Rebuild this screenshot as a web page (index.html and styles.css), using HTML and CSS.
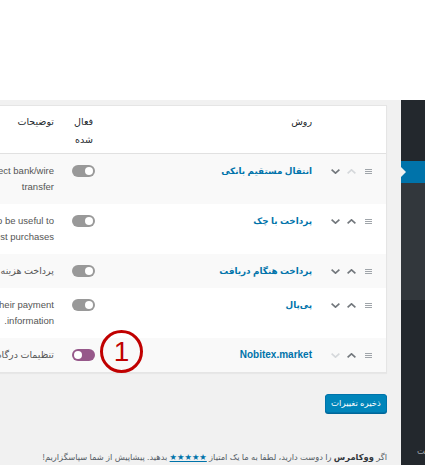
FILE: index.html
```html
<!DOCTYPE html>
<html lang="fa" dir="rtl">
<head>
<meta charset="utf-8">
<title>درگاه‌های پرداخت</title>
<link rel="stylesheet" href="styles.css">
</head>
<body>
<div class="topbar"></div>
<div class="layout">
  <aside class="adminmenu">
    <div class="menu-inner">
      <div class="menu-top"></div>
      <div class="menu-current"></div>
      <div class="submenu"></div>
      <div class="collapse"><span>جمع کردن فهرست</span></div>
    </div>
  </aside>
  <main class="content">
    <table class="gateways">
      <colgroup>
        <col class="c-sort"><col class="c-name"><col class="c-status"><col class="c-desc">
      </colgroup>
      <thead>
        <tr>
          <th class="sort"></th>
          <th class="name">روش</th>
          <th class="status">فعال شده</th>
          <th class="desc">توضیحات</th>
        </tr>
      </thead>
      <tbody>
        <tr class="alt">
          <td class="sort"><div class="sorter">
            <svg class="ico handle" width="7" height="5" viewBox="0 0 7 5"><path d="M0 0.5H7M0 2.5H7M0 4.5H7"/></svg>
            <svg class="ico off" width="9" height="5" viewBox="0 0 9 5"><path d="M0.6 4.4L4.5 0.8L8.4 4.4"/></svg>
            <svg class="ico" width="9" height="5" viewBox="0 0 9 5"><path d="M0.6 0.6L4.5 4.2L8.4 0.6"/></svg>
          </div></td>
          <td class="name"><a href="#">انتقال مستقیم بانکی</a></td>
          <td class="status"><span class="toggle on"></span></td>
          <td class="desc">Take payments in person via BACS. More commonly known as direct bank/wire<br>transfer</td>
        </tr>
        <tr>
          <td class="sort"><div class="sorter">
            <svg class="ico handle" width="7" height="5" viewBox="0 0 7 5"><path d="M0 0.5H7M0 2.5H7M0 4.5H7"/></svg>
            <svg class="ico" width="9" height="5" viewBox="0 0 9 5"><path d="M0.6 4.4L4.5 0.8L8.4 4.4"/></svg>
            <svg class="ico" width="9" height="5" viewBox="0 0 9 5"><path d="M0.6 0.6L4.5 4.2L8.4 0.6"/></svg>
          </div></td>
          <td class="name"><a href="#">پرداخت با چک</a></td>
          <td class="status"><span class="toggle on"></span></td>
          <td class="desc">Take payments in person via checks. This offline gateway can also be useful to<br>test purchases</td>
        </tr>
        <tr class="alt">
          <td class="sort"><div class="sorter">
            <svg class="ico handle" width="7" height="5" viewBox="0 0 7 5"><path d="M0 0.5H7M0 2.5H7M0 4.5H7"/></svg>
            <svg class="ico" width="9" height="5" viewBox="0 0 9 5"><path d="M0.6 4.4L4.5 0.8L8.4 4.4"/></svg>
            <svg class="ico" width="9" height="5" viewBox="0 0 9 5"><path d="M0.6 0.6L4.5 4.2L8.4 0.6"/></svg>
          </div></td>
          <td class="name"><a href="#">پرداخت هنگام دریافت</a></td>
          <td class="status"><span class="toggle on"></span></td>
          <td class="desc">پرداخت هزینه هنگام تحویل کالا.</td>
        </tr>
        <tr>
          <td class="sort"><div class="sorter">
            <svg class="ico handle" width="7" height="5" viewBox="0 0 7 5"><path d="M0 0.5H7M0 2.5H7M0 4.5H7"/></svg>
            <svg class="ico" width="9" height="5" viewBox="0 0 9 5"><path d="M0.6 4.4L4.5 0.8L8.4 4.4"/></svg>
            <svg class="ico" width="9" height="5" viewBox="0 0 9 5"><path d="M0.6 0.6L4.5 4.2L8.4 0.6"/></svg>
          </div></td>
          <td class="name"><a href="#">پی‌پال</a></td>
          <td class="status"><span class="toggle on"></span></td>
          <td class="desc">PayPal Standard redirects customers to PayPal to enter their payment<br>information.</td>
        </tr>
        <tr class="alt">
          <td class="sort"><div class="sorter">
            <svg class="ico handle" width="7" height="5" viewBox="0 0 7 5"><path d="M0 0.5H7M0 2.5H7M0 4.5H7"/></svg>
            <svg class="ico" width="9" height="5" viewBox="0 0 9 5"><path d="M0.6 4.4L4.5 0.8L8.4 4.4"/></svg>
            <svg class="ico off" width="9" height="5" viewBox="0 0 9 5"><path d="M0.6 0.6L4.5 4.2L8.4 0.6"/></svg>
          </div></td>
          <td class="name"><a href="#" class="latin">Nobitex.market</a></td>
          <td class="status"><span class="toggle purple"></span></td>
          <td class="desc">تنظیمات درگاه پرداخت نوبیتکس</td>
        </tr>
      </tbody>
    </table>
    <div class="annot">1</div>
    <p class="submit"><button type="button" class="btn-primary">ذخیره تغییرات</button></p>
    <p class="footer-note">اگر <strong>ووکامرس</strong> را دوست دارید، لطفا به ما یک امتیاز <a href="#" class="stars">★★★★★</a> بدهید. پیشاپیش از شما سپاسگزاریم!</p>
  </main>
</div>
</body>
</html>
```

FILE: styles.css
```css
* { box-sizing: border-box; }
html, body { margin: 0; padding: 0; }
body {
  direction: rtl;
  width: 425px;
  height: 465px;
  overflow: hidden;
  background: #f1f1f1;
  color: #444;
  font-family: "Liberation Sans", "DejaVu Sans", sans-serif;
  font-size: 9.5px;
}

.topbar { height: 100px; background: #fff; }

.layout { display: flex; min-height: 365px; }

/* admin menu (only its left edge is visible) */
.adminmenu {
  flex: 0 0 24px;
  width: 24px;
  background: #23282d;
  overflow: hidden;
  direction: ltr;
}
.menu-inner { width: 160px; direction: rtl; }
.menu-top { height: 61px; }
.menu-current { height: 22px; background: #0073aa; position: relative; }
.menu-current::after {
  content: "";
  position: absolute;
  left: 0;
  top: 6px;
  border: 5px solid transparent;
  border-left-color: #f1f1f1;
}
.submenu { height: 117px; background: #32373c; }
.collapse {
  display: flex;
  justify-content: flex-end;
  padding: 143px 0 0 16px;
  line-height: 16px;
  color: #a0a5aa;
  font-size: 8.5px;
  white-space: nowrap;
}

/* main content */
.content {
  flex: 1 1 auto;
  min-width: 0;
  overflow: hidden;
  position: relative;
  padding: 5px 14px 0 0;
}

.gateways {
  width: 600px;
  table-layout: fixed;
  border-collapse: separate;
  border-spacing: 0;
  background: #fff;
  border: 1px solid #e5e5e5;
  box-shadow: 0 1px 1px rgba(0,0,0,.04);
}
.c-sort { width: 64px; }
.c-name { width: 217px; }
.c-status { width: 41px; }
.c-desc { width: 276px; }

.gateways th {
  padding: 7px 10px 4px;
  text-align: right;
  font-weight: normal;
  line-height: 18px;
  color: #23282d;
  border-bottom: 1px solid #e1e1e1;
  vertical-align: top;
}
.gateways th.status { padding: 7px 12px 4px 8px; }

.gateways td {
  padding: 9px 10px;
  line-height: 16px;
  vertical-align: top;
}
.gateways tr.alt td { background: #f9f9f9; }

.gateways td.sort { padding: 9px 14px 9px 0; }
.sorter {
  display: flex;
  align-items: center;
  height: 16px;
  gap: 7px;
}
.sorter .handle { margin-left: 2px; }
.ico { display: block; fill: none; stroke: #72777c; stroke-width: 1.6; }
.ico.off { stroke: #d5d8db; }
.ico.handle { stroke: #a0a5aa; stroke-width: 1; }

.gateways td.name a {
  color: #0073aa;
  font-weight: bold;
  text-decoration: none;
  font-size: 8.8px;
}
.gateways td.name a.latin { font-size: 10px; }

.gateways td.status { padding: 9px 10px 9px 8px; }
.toggle {
  display: block;
  position: relative;
  width: 23px;
  height: 12px;
  margin-top: 2px;
  border-radius: 6px;
  background: #999;
}
.toggle::after {
  content: "";
  position: absolute;
  top: 2px;
  width: 8px;
  height: 8px;
  border-radius: 50%;
  background: #fff;
}
.toggle.on::after { right: 2px; }
.toggle.purple { background: #96588a; }
.toggle.purple::after { left: 2px; }

.gateways td.desc {
  white-space: nowrap;
  color: #555;
}

/* annotation */
.annot {
  position: absolute;
  left: 100px;
  top: 230px;
  width: 43px;
  height: 43px;
  border: 3px solid #c00000;
  border-radius: 50%;
  color: #c00000;
  font: 28px/37px "Liberation Sans", sans-serif;
  text-align: center;
}

.submit { margin: 21px 0 0; }
.btn-primary {
  height: 19px;
  width: 62px;
  padding: 0;
  background: #0085ba;
  border: 1px solid #0073aa;
  border-radius: 3px;
  box-shadow: 0 1px 0 #006799;
  color: #fff;
  font-family: "Liberation Sans", "DejaVu Sans", sans-serif;
  font-size: 8.5px;
  line-height: 17px;
}

.footer-note {
  margin: 36px 0 0;
  line-height: 16px;
  color: #555d66;
  white-space: nowrap;
  font-size: 8.3px;
}
.footer-note strong { color: #32373c; }
.footer-note .stars { color: #0073aa; letter-spacing: -1px; }
```
